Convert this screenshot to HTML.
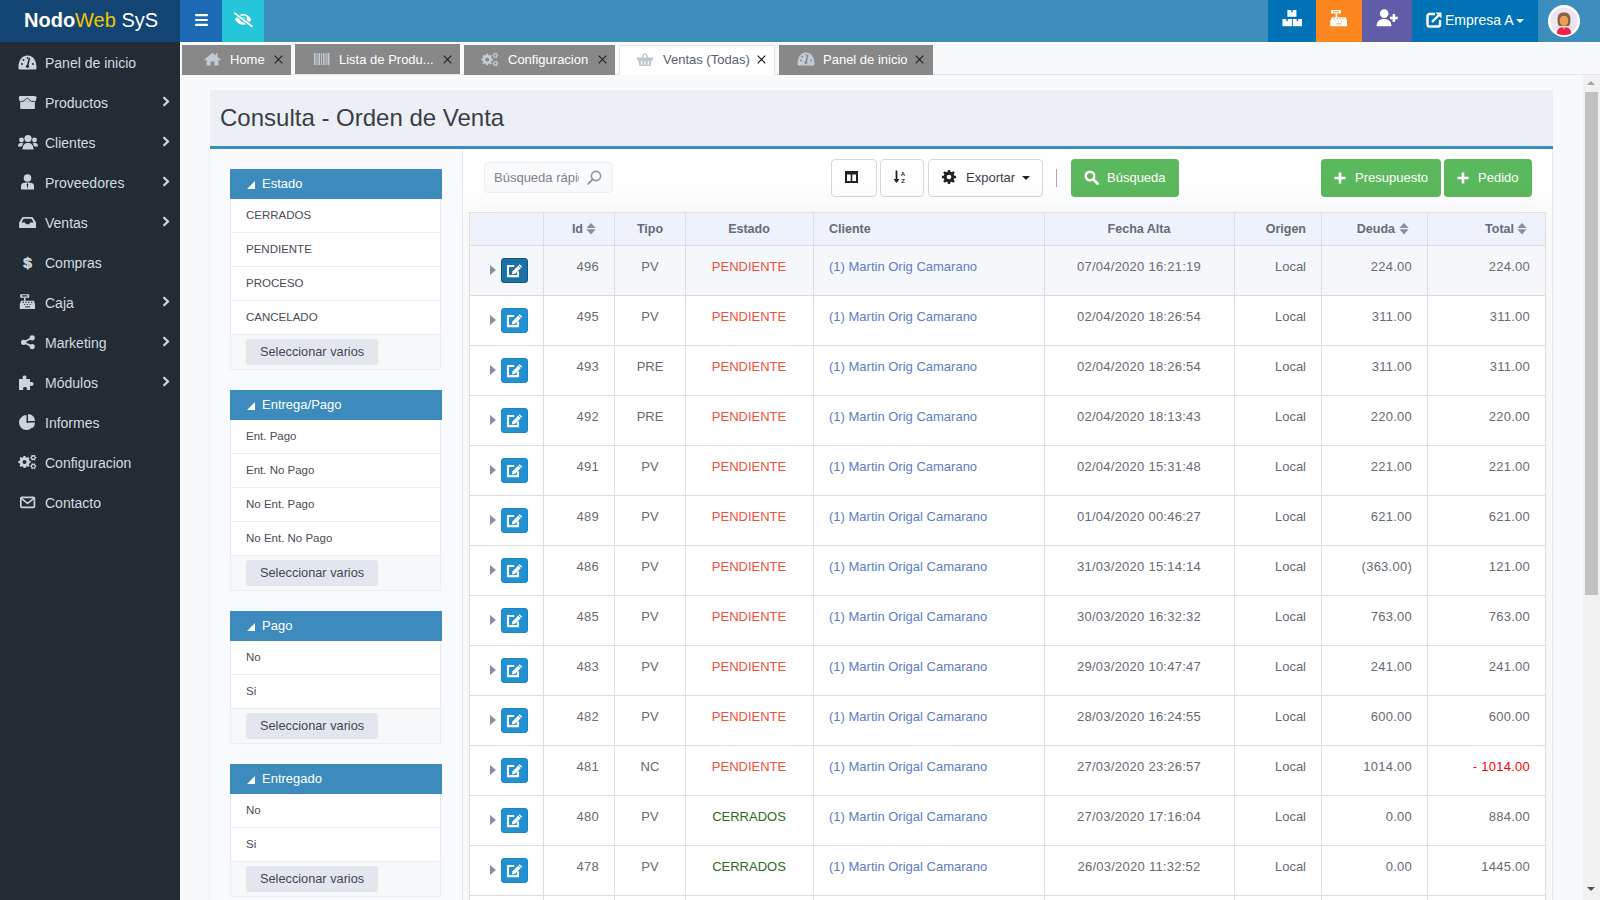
<!DOCTYPE html><html><head><meta charset="utf-8"><style>
*{box-sizing:border-box;margin:0;padding:0}
html,body{width:1600px;height:900px;overflow:hidden}
body{font-family:"Liberation Sans",sans-serif;background:#f8f9fb;position:relative;color:#5c6068}
.a{position:absolute}
svg{display:block}
#logo{left:0;top:0;width:180px;height:42px;background:#124474;color:#fff;font-size:20px;line-height:42px;white-space:nowrap}
#logo b{font-weight:bold}
#logo span{color:#f5c400}
#side{left:0;top:42px;width:180px;height:858px;background:#222c32}
.mi{position:absolute;left:0;width:180px;height:40px;color:#d3dbe2;font-size:14px}
.mi svg{position:absolute;left:18px;top:12px}
.mi .tx{position:absolute;left:45px;top:13px;line-height:16px;white-space:nowrap}
.mi .ch{position:absolute;left:162px;top:14px}
#top{left:180px;top:0;width:1420px;height:42px;background:#3c8dbc}
.tb{position:absolute;top:0;height:42px}
.tab{position:absolute;height:30px;background:#888;color:#fff;font-size:13px}
.tab .tx{position:absolute;top:7px;line-height:16px;white-space:nowrap}
.tab svg{position:absolute}
.fh{position:absolute;left:230px;width:212px;height:30px;background:#3c8bbc;color:#fff;font-size:13px}
.fh .tx{position:absolute;left:32px;top:7px;line-height:16px}
.fh .tri{position:absolute;left:17px;top:12px;width:0;height:0;border-left:8px solid transparent;border-bottom:8px solid #fff}
.fi{position:absolute;left:230px;width:211px;height:34px;background:#fff;border-left:1px solid #e6e9ef;border-right:1px solid #e6e9ef;border-bottom:1px solid #eceef2;font-size:11.5px;color:#4a4d55}
.fi .tx{position:absolute;left:15px;top:9px;line-height:14px;white-space:nowrap}
.ff{position:absolute;left:230px;width:211px;height:35px;background:#f7f8fa;border-left:1px solid #eef0f3;border-right:1px solid #eef0f3;border-bottom:1px solid #eceef2}
.ff .bt{position:absolute;left:15px;top:4px;width:132px;height:26px;background:#e2e7ed;border-radius:3px;font-size:12.75px;color:#44474f;line-height:26px;padding-left:14px;white-space:nowrap}
.tbt{position:absolute;top:159px;height:38px;background:#fff;border:1px solid #d6d8dc;border-radius:4px}
.gbt{position:absolute;top:159px;height:38px;background:#5cb85c;border-radius:4px;color:#fff;font-size:13px}
.gbt .tx{position:absolute;top:11px;line-height:16px;white-space:nowrap}
.gbt svg{position:absolute}

.th{position:absolute;top:212px;height:34px;background:#eef2fa;border-top:1px solid #dcdfe4;border-bottom:1px solid #d9dce1;font-weight:bold;font-size:13.5px;color:#5b6170}
.vl{position:absolute;width:1px;background:#dadde2}
.hl{position:absolute;left:469px;width:1077px;height:1px;background:#dadde2}
.c{position:absolute;font-size:13px;line-height:16px;white-space:nowrap;color:#676b73}
.n{letter-spacing:0.25px}
.eb{position:absolute;left:501px;width:27px;height:25px;background:#1e8fd1;border-radius:3px}
.eb svg{position:absolute;left:-1px;top:-1px}
.ar{position:absolute;left:490px;width:0;height:0;border-top:5px solid transparent;border-bottom:5px solid transparent;border-left:6px solid #8891a3}
.sort{position:absolute;top:223px}
</style></head><body><div id="logo" class="a"><div class="a" style="left:24px;top:-1px"><b>Nodo</b><span>Web</span> SyS</div></div><div id="top" class="a"></div><div class="tb" style="left:180px;width:42px;background:#1c69b4"><svg class="a" style="left:15px;top:14px" width="13" height="12" viewBox="0 0 13 12"><rect x="0" y="0" width="13" height="2.2" rx="1" fill="#fff"/><rect x="0" y="4.9" width="13" height="2.2" rx="1" fill="#fff"/><rect x="0" y="9.8" width="13" height="2.2" rx="1" fill="#fff"/></svg></div><div class="tb" style="left:222px;width:42px;background:#25c5da"><svg class="a" style="left:12px;top:12px" width="19" height="16" viewBox="0 0 19 16"><path d="M1 7.4 C3.5 3.5 6.5 2 9.2 2 C11.9 2 14.9 3.5 17.4 7.4 C14.9 11.3 11.9 12.8 9.2 12.8 C6.5 12.8 3.5 11.3 1 7.4Z" fill="#fff"/><circle cx="9.6" cy="6.9" r="3.3" fill="#25c5da"/><circle cx="9.6" cy="6.9" r="1.7" fill="#fff"/><path d="M0.8 1.3 L17.8 14.2" stroke="#25c5da" stroke-width="3.6"/><path d="M0.8 1.3 L17.8 14.2" stroke="#fff" stroke-width="2" stroke-linecap="round"/></svg></div><div class="tb" style="left:1268px;width:48px;background:#0073b7"><svg class="a" style="left:14px;top:10px" width="20" height="17" viewBox="0 0 20 17"><rect x="5.4" y="0" width="9" height="6.8" fill="#fff"/><rect x="0.4" y="9" width="9.5" height="7.2" fill="#fff"/><rect x="10.8" y="9" width="9.2" height="7.2" fill="#fff"/><rect x="9.2" y="0" width="1.4" height="2.2" fill="#0073b7"/><rect x="4.4" y="9" width="1.4" height="2.2" fill="#0073b7"/><rect x="14.7" y="9" width="1.4" height="2.2" fill="#0073b7"/></svg></div><div class="tb" style="left:1316px;width:46px;background:#fe861f"><svg class="a" style="left:14px;top:10px" width="18" height="17" viewBox="0 0 18 17"><rect x="1" y="0" width="10" height="3.6" rx="0.6" fill="#fff"/><rect x="3" y="1.2" width="6" height="1.2" fill="#f9b070"/><rect x="5.6" y="3.6" width="1.6" height="3.6" fill="#fff"/><path d="M2 7.2 H16 L17 11 V16.2 H0.2 V11Z" fill="#fff"/><g fill="#f9b070"><rect x="3.5" y="8.2" width="1.4" height="1.2"/><rect x="6.5" y="8.2" width="1.4" height="1.2"/><rect x="9.5" y="8.2" width="1.4" height="1.2"/><rect x="12.5" y="8.2" width="1.4" height="1.2"/><rect x="5" y="10.6" width="1.2" height="1"/><rect x="8" y="10.6" width="1.2" height="1"/><rect x="11" y="10.6" width="1.2" height="1"/><rect x="6.5" y="13.2" width="5" height="1.2"/></g></svg></div><div class="tb" style="left:1362px;width:50px;background:#605ca8"><svg class="a" style="left:14px;top:9px" width="22" height="18" viewBox="0 0 22 18"><circle cx="8.2" cy="4.6" r="4.3" fill="#fff"/><path d="M0.6 17.2 C0.6 12 3.4 10 8 10 C12.6 10 15.4 12 15.4 17.2Z" fill="#fff"/><rect x="14" y="7.7" width="7.7" height="2.6" fill="#fff"/><rect x="16.55" y="5.1" width="2.6" height="7.8" fill="#fff"/></svg></div><div class="tb" style="left:1412px;width:126px;background:#0073b7;color:#fff;font-size:14px"><svg class="a" style="left:14px;top:12px" width="16" height="16" viewBox="0 0 16 16"><path d="M9 2 H3.5 C2.5 2 1.5 3 1.5 4 V12.5 C1.5 13.5 2.5 14.5 3.5 14.5 H12 C13 14.5 14 13.5 14 12.5 V8" stroke="#fff" stroke-width="2.4" fill="none"/><path d="M6 10 L14 2" stroke="#fff" stroke-width="2.4"/><path d="M9.5 0.5 H15.5 V6.5Z" fill="#fff"/></svg><div class="a" style="left:33px;top:11px;line-height:18px;white-space:nowrap">Empresa A</div><div class="a" style="left:104px;top:18.5px;width:0;height:0;border-left:4px solid transparent;border-right:4px solid transparent;border-top:4.5px solid #fff"></div></div><svg class="a" style="left:1548px;top:5px" width="32" height="32" viewBox="0 0 32 32"><circle cx="16" cy="16" r="16" fill="#fff"/><circle cx="16" cy="16" r="13.6" fill="#ebe5ef"/><path d="M9.6 16 C9 10 11.5 7.5 16 7.5 C20.5 7.5 23 10 22.4 16 C22.4 19 21.5 21 20 21 H12 C10.5 21 9.6 19 9.6 16Z" fill="#8b5e45"/><ellipse cx="16" cy="15.5" rx="4.3" ry="5.3" fill="#e7a35a"/><path d="M12 11.5 C14 11 17 10 20 12 V10 C18 8.5 14 8.5 12 10Z" fill="#8b5e45"/><path d="M9 28.5 C9 24 11.5 22 16 22 C20.5 22 23 24 23 28.5 C21 29.6 18.5 30.2 16 30.2 C13.5 30.2 11 29.6 9 28.5Z" fill="#f01f4b"/><path d="M14 22 L16 24.5 L18 22Z" fill="#e7a35a"/></svg><div class="a" style="left:180px;top:74px;width:1420px;height:1px;background:#e1e5ec"></div><div class="a" style="left:180px;top:42px;width:1420px;height:3px;background:#fbfcfd"></div><div id="side" class="a"></div><div class="mi" style="top:42px"><svg width="19" height="16" viewBox="0 0 19 16"><path d="M0.5 14 C0.2 6 4.5 1.5 9.5 1.5 C14.5 1.5 18.8 6 18.5 14 C18.5 15 18 15.5 17 15.5 H2 C1 15.5 0.5 15 0.5 14Z" fill="#c9d4dd"/><path d="M9.5 12 L11.5 4" stroke="#222c32" stroke-width="1.6"/><circle cx="9.5" cy="12.3" r="1.6" fill="#222c32"/><circle cx="4" cy="10" r="1" fill="#222c32"/><circle cx="5.5" cy="6" r="1" fill="#222c32"/><circle cx="15" cy="10" r="1" fill="#222c32"/><circle cx="9.5" cy="4" r="0.9" fill="#222c32"/></svg><div class="tx">Panel de inicio</div></div><div class="mi" style="top:82px"><svg width="19" height="16" viewBox="0 0 19 16"><path d="M0.6 3.6 L1.8 2 H17.2 L18.8 3.6 L17.4 7.4 H1.8Z" fill="#c9d4dd"/><path d="M2.2 7.2 H16.9 V14 C16.9 14.6 16.4 15 15.8 15 H3.3 C2.7 15 2.2 14.6 2.2 14Z" fill="#c9d4dd"/><path d="M2.4 7.4 H4.9 L9.3 4 L13.4 7.4 H16.6" stroke="#222c32" stroke-width="0.9" fill="none"/></svg><div class="tx">Productos</div><svg class="ch" width="8" height="11" viewBox="0 0 8 11"><path d="M1.5 1.2 L6 5.5 L1.5 9.8" stroke="#d3dbe2" stroke-width="2.2" fill="none"/></svg></div><div class="mi" style="top:122px"><svg width="20" height="16" viewBox="0 0 20 16"><circle cx="10" cy="4.5" r="3.6" fill="#c9d4dd"/><circle cx="3.5" cy="6" r="2.4" fill="#c9d4dd"/><circle cx="16.5" cy="6" r="2.4" fill="#c9d4dd"/><path d="M4.5 15.5 C4.5 10.5 7 9 10 9 C13 9 15.5 10.5 15.5 15.5Z" fill="#c9d4dd"/><path d="M0 12.5 C0 9.5 1.5 9 3.5 9 C4.5 9 5 9.2 5.5 9.6 C4.5 10.5 4 11.5 3.8 12.5Z" fill="#c9d4dd"/><path d="M20 12.5 C20 9.5 18.5 9 16.5 9 C15.5 9 15 9.2 14.5 9.6 C15.5 10.5 16 11.5 16.2 12.5Z" fill="#c9d4dd"/></svg><div class="tx">Clientes</div><svg class="ch" width="8" height="11" viewBox="0 0 8 11"><path d="M1.5 1.2 L6 5.5 L1.5 9.8" stroke="#d3dbe2" stroke-width="2.2" fill="none"/></svg></div><div class="mi" style="top:162px"><svg width="19" height="16" viewBox="0 0 19 16"><circle cx="9.5" cy="4" r="3.8" fill="#c9d4dd"/><path d="M3 15.5 V12 C3 9.5 5 8.5 9.5 8.5 C14 8.5 16 9.5 16 12 V15.5Z" fill="#c9d4dd"/><path d="M9.5 9 L8.7 10.5 L9.5 15 L10.3 10.5Z" fill="#222c32"/></svg><div class="tx">Proveedores</div><svg class="ch" width="8" height="11" viewBox="0 0 8 11"><path d="M1.5 1.2 L6 5.5 L1.5 9.8" stroke="#d3dbe2" stroke-width="2.2" fill="none"/></svg></div><div class="mi" style="top:202px"><svg width="19" height="16" viewBox="0 0 19 16"><path d="M1.1 8.6 L4.6 3 H14.5 L18 8.6 V13.4 C18 13.8 17.7 14.1 17.3 14.1 H1.8 C1.4 14.1 1.1 13.8 1.1 13.4Z" fill="#c9d4dd"/><path d="M5.6 4.7 H13.5 L15.7 8.4 H12.1 L11.2 10.3 H8 L7.1 8.4 H3.4Z" fill="#222c32"/></svg><div class="tx">Ventas</div><svg class="ch" width="8" height="11" viewBox="0 0 8 11"><path d="M1.5 1.2 L6 5.5 L1.5 9.8" stroke="#d3dbe2" stroke-width="2.2" fill="none"/></svg></div><div class="mi" style="top:242px"><svg width="19" height="16" viewBox="0 0 19 16"><text x="9.5" y="14" font-family="Liberation Sans" font-weight="bold" font-size="15.5" fill="#c9d4dd" stroke="#c9d4dd" stroke-width="0.7" text-anchor="middle">$</text></svg><div class="tx">Compras</div></div><div class="mi" style="top:282px"><svg width="19" height="16" viewBox="0 0 19 16"><rect x="2.2" y="0.3" width="9" height="3.4" rx="0.5" fill="#c9d4dd"/><rect x="4" y="1.3" width="5.4" height="1.2" fill="#222c32"/><rect x="6" y="3.6" width="1.5" height="3.2" fill="#c9d4dd"/><path d="M3 6.8 H16 L17 10.5 V15 H1.8 V10.5Z" fill="#c9d4dd"/><g fill="#222c32"><rect x="4.6" y="7.8" width="1.3" height="1.1"/><rect x="7.4" y="7.8" width="1.3" height="1.1"/><rect x="10.2" y="7.8" width="1.3" height="1.1"/><rect x="13" y="7.8" width="1.3" height="1.1"/><rect x="6" y="10" width="1.1" height="0.9"/><rect x="8.8" y="10" width="1.1" height="0.9"/><rect x="11.6" y="10" width="1.1" height="0.9"/><rect x="7" y="12.4" width="5" height="1"/></g></svg><div class="tx">Caja</div><svg class="ch" width="8" height="11" viewBox="0 0 8 11"><path d="M1.5 1.2 L6 5.5 L1.5 9.8" stroke="#d3dbe2" stroke-width="2.2" fill="none"/></svg></div><div class="mi" style="top:322px"><svg width="19" height="16" viewBox="0 0 19 16"><circle cx="14.2" cy="3.8" r="2.6" fill="#c9d4dd"/><circle cx="5.6" cy="8.3" r="2.6" fill="#c9d4dd"/><circle cx="14.2" cy="12.6" r="2.6" fill="#c9d4dd"/><path d="M5.6 8.3 L14.2 3.8 M5.6 8.3 L14.2 12.6" stroke="#c9d4dd" stroke-width="1.8"/></svg><div class="tx">Marketing</div><svg class="ch" width="8" height="11" viewBox="0 0 8 11"><path d="M1.5 1.2 L6 5.5 L1.5 9.8" stroke="#d3dbe2" stroke-width="2.2" fill="none"/></svg></div><div class="mi" style="top:362px"><svg width="19" height="16" viewBox="0 0 19 16"><path d="M1 5 H5 C4 3.5 4.5 1.5 6.5 1.5 C8.5 1.5 9 3.5 8 5 H12 V8.5 C13.5 7.5 15.5 8 15.5 10 C15.5 12 13.5 12.5 12 11.5 V16 H8.5 C9.5 14.5 9 13 7 13 C5 13 4.5 14.5 5.5 16 H1Z" fill="#c9d4dd"/></svg><div class="tx">Módulos</div><svg class="ch" width="8" height="11" viewBox="0 0 8 11"><path d="M1.5 1.2 L6 5.5 L1.5 9.8" stroke="#d3dbe2" stroke-width="2.2" fill="none"/></svg></div><div class="mi" style="top:402px"><svg width="19" height="16" viewBox="0 0 19 16"><path d="M8.5 1 A7.5 7.5 0 1 0 16 9 H8.5Z" fill="#c9d4dd"/><path d="M10 0 A7 7 0 0 1 17 7 H10Z" fill="#c9d4dd"/><path d="M10 8.5 H17 A7 7 0 0 1 14.5 14Z" fill="#c9d4dd"/></svg><div class="tx">Informes</div></div><div class="mi" style="top:442px"><svg width="19" height="16" viewBox="0 0 19 16"><path d="M11.26 6.82 L12.62 6.98 L12.62 9.02 L11.26 9.18 L10.70 10.53 L11.54 11.60 L10.10 13.04 L9.03 12.20 L7.68 12.76 L7.52 14.12 L5.48 14.12 L5.32 12.76 L3.97 12.20 L2.90 13.04 L1.46 11.60 L2.30 10.53 L1.74 9.18 L0.38 9.02 L0.38 6.98 L1.74 6.82 L2.30 5.47 L1.46 4.40 L2.90 2.96 L3.97 3.80 L5.32 3.24 L5.48 1.88 L7.52 1.88 L7.68 3.24 L9.03 3.80 L10.10 2.96 L11.54 4.40 L10.70 5.47Z" fill="#c9d4dd"/><circle cx="6.5" cy="8" r="2.0" fill="#222c32"/><path d="M17.57 2.83 L18.33 2.92 L18.33 4.28 L17.57 4.37 L17.10 5.19 L17.40 5.88 L16.23 6.56 L15.77 5.95 L14.83 5.95 L14.37 6.56 L13.20 5.88 L13.50 5.19 L13.03 4.37 L12.27 4.28 L12.27 2.92 L13.03 2.83 L13.50 2.01 L13.20 1.32 L14.37 0.64 L14.83 1.25 L15.77 1.25 L16.23 0.64 L17.40 1.32 L17.10 2.01Z" fill="#c9d4dd"/><circle cx="15.3" cy="3.6" r="1.2" fill="#222c32"/><path d="M17.57 11.43 L18.33 11.52 L18.33 12.88 L17.57 12.97 L17.10 13.79 L17.40 14.48 L16.23 15.16 L15.77 14.55 L14.83 14.55 L14.37 15.16 L13.20 14.48 L13.50 13.79 L13.03 12.97 L12.27 12.88 L12.27 11.52 L13.03 11.43 L13.50 10.61 L13.20 9.92 L14.37 9.24 L14.83 9.85 L15.77 9.85 L16.23 9.24 L17.40 9.92 L17.10 10.61Z" fill="#c9d4dd"/><circle cx="15.3" cy="12.2" r="1.2" fill="#222c32"/></svg><div class="tx">Configuracion</div></div><div class="mi" style="top:482px"><svg width="19" height="16" viewBox="0 0 19 16"><rect x="2.8" y="3.3" width="13.6" height="10" rx="1" fill="none" stroke="#c9d4dd" stroke-width="1.7"/><path d="M3 4.2 L9.6 9.4 L16.2 4.2" stroke="#c9d4dd" stroke-width="1.6" fill="none"/></svg><div class="tx">Contacto</div></div><div class="tab" style="left:182px;top:45px;width:109px;height:30px"><div class="a" style="left:22px;top:7px"><svg width="17" height="14" viewBox="0 0 17 14"><path d="M8.5 0.8 L0.3 7.6 L1.2 8.7 L2.6 7.5 V13.6 H6.6 V9.6 H10.4 V13.6 H14.4 V7.5 L15.8 8.7 L16.7 7.6 L13.6 5 V1.3 H11.8 V3.5Z" fill="#c2ccd4"/></svg></div><div class="tx" style="left:48px;top:6.5px">Home</div><div class="a" style="left:92px;top:10px"><svg width="9" height="9" viewBox="0 0 9 9"><path d="M0.7 0.7 L8.3 8.3 M8.3 0.7 L0.7 8.3" stroke="#222" stroke-width="1.15"/></svg></div></div><div class="tab" style="left:295px;top:44px;width:165px;height:30px"><div class="a" style="left:19px;top:9px"><svg width="16" height="12" viewBox="0 0 16 12"><g fill="#c2ccd4"><rect x="0" y="0" width="1.5" height="12"/><rect x="2.5" y="0" width="1" height="12"/><rect x="4.5" y="0" width="1.5" height="12"/><rect x="7" y="0" width="1" height="12"/><rect x="9" y="0" width="1.5" height="12"/><rect x="11.5" y="0" width="1" height="12"/><rect x="13.5" y="0" width="2" height="12"/></g></svg></div><div class="tx" style="left:44px;top:7.5px">Lista de Produ...</div><div class="a" style="left:148px;top:11px"><svg width="9" height="9" viewBox="0 0 9 9"><path d="M0.7 0.7 L8.3 8.3 M8.3 0.7 L0.7 8.3" stroke="#222" stroke-width="1.15"/></svg></div></div><div class="tab" style="left:464px;top:45px;width:151px;height:30px"><div class="a" style="left:17px;top:7px"><svg width="18" height="15" viewBox="0 0 19 16"><path d="M11.26 6.82 L12.62 6.98 L12.62 9.02 L11.26 9.18 L10.70 10.53 L11.54 11.60 L10.10 13.04 L9.03 12.20 L7.68 12.76 L7.52 14.12 L5.48 14.12 L5.32 12.76 L3.97 12.20 L2.90 13.04 L1.46 11.60 L2.30 10.53 L1.74 9.18 L0.38 9.02 L0.38 6.98 L1.74 6.82 L2.30 5.47 L1.46 4.40 L2.90 2.96 L3.97 3.80 L5.32 3.24 L5.48 1.88 L7.52 1.88 L7.68 3.24 L9.03 3.80 L10.10 2.96 L11.54 4.40 L10.70 5.47Z" fill="#c2ccd4"/><circle cx="6.5" cy="8" r="2.0" fill="#888"/><path d="M17.57 2.83 L18.33 2.92 L18.33 4.28 L17.57 4.37 L17.10 5.19 L17.40 5.88 L16.23 6.56 L15.77 5.95 L14.83 5.95 L14.37 6.56 L13.20 5.88 L13.50 5.19 L13.03 4.37 L12.27 4.28 L12.27 2.92 L13.03 2.83 L13.50 2.01 L13.20 1.32 L14.37 0.64 L14.83 1.25 L15.77 1.25 L16.23 0.64 L17.40 1.32 L17.10 2.01Z" fill="#c2ccd4"/><circle cx="15.3" cy="3.6" r="1.2" fill="#888"/><path d="M17.57 11.43 L18.33 11.52 L18.33 12.88 L17.57 12.97 L17.10 13.79 L17.40 14.48 L16.23 15.16 L15.77 14.55 L14.83 14.55 L14.37 15.16 L13.20 14.48 L13.50 13.79 L13.03 12.97 L12.27 12.88 L12.27 11.52 L13.03 11.43 L13.50 10.61 L13.20 9.92 L14.37 9.24 L14.83 9.85 L15.77 9.85 L16.23 9.24 L17.40 9.92 L17.10 10.61Z" fill="#c2ccd4"/><circle cx="15.3" cy="12.2" r="1.2" fill="#888"/></svg></div><div class="tx" style="left:44px;top:6.5px">Configuracion</div><div class="a" style="left:134px;top:10px"><svg width="9" height="9" viewBox="0 0 9 9"><path d="M0.7 0.7 L8.3 8.3 M8.3 0.7 L0.7 8.3" stroke="#222" stroke-width="1.15"/></svg></div></div><div class="tab" style="left:779px;top:45px;width:154px;height:30px"><div class="a" style="left:18px;top:6px"><svg width="18" height="15" viewBox="0 0 19 16"><path d="M0.5 14 C0.2 6 4.5 1.5 9.5 1.5 C14.5 1.5 18.8 6 18.5 14 C18.5 15 18 15.5 17 15.5 H2 C1 15.5 0.5 15 0.5 14Z" fill="#c2ccd4"/><path d="M9.5 12 L11.5 4" stroke="#888" stroke-width="1.6"/><circle cx="9.5" cy="12.3" r="1.6" fill="#888"/><circle cx="4" cy="10" r="1" fill="#888"/><circle cx="5.5" cy="6" r="1" fill="#888"/><circle cx="15" cy="10" r="1" fill="#888"/><circle cx="9.5" cy="4" r="0.9" fill="#888"/></svg></div><div class="tx" style="left:44px;top:6.5px">Panel de inicio</div><div class="a" style="left:136px;top:10px"><svg width="9" height="9" viewBox="0 0 9 9"><path d="M0.7 0.7 L8.3 8.3 M8.3 0.7 L0.7 8.3" stroke="#222" stroke-width="1.15"/></svg></div></div><div class="a" style="left:619px;top:45px;width:156px;height:30px;background:#fff;border:1px solid #dfe4eb;border-bottom:none"></div><div class="a" style="left:637px;top:53px"><svg width="16" height="13" viewBox="0 0 16 13"><path d="M5 5 L7.5 0.5 M11 5 L8.5 0.5" stroke="#bcc8d0" stroke-width="1.5"/><rect x="0" y="4.5" width="16" height="2.5" fill="#bcc8d0"/><path d="M1.2 7 H14.8 L13.5 13 H2.5Z" fill="#bcc8d0"/><g fill="#fff"><rect x="4" y="8.2" width="1.2" height="3.5"/><rect x="7.4" y="8.2" width="1.2" height="3.5"/><rect x="10.8" y="8.2" width="1.2" height="3.5"/></g></svg></div><div class="a" style="left:663px;top:51.5px;font-size:13px;line-height:16px;color:#5b6270;white-space:nowrap">Ventas (Todas)</div><div class="a" style="left:757px;top:55px"><svg width="9" height="9" viewBox="0 0 9 9"><path d="M0.7 0.7 L8.3 8.3 M8.3 0.7 L0.7 8.3" stroke="#111" stroke-width="1.15"/></svg></div><div class="a" style="left:1583px;top:75px;width:17px;height:825px;background:#f1f1f1"></div><div class="a" style="left:1585px;top:92px;width:13px;height:503px;background:#c1c1c1"></div><div class="a" style="left:1587px;top:81px;width:0;height:0;border-left:4px solid transparent;border-right:4px solid transparent;border-bottom:4px solid #a3a3a3"></div><div class="a" style="left:1587px;top:887px;width:0;height:0;border-left:4px solid transparent;border-right:4px solid transparent;border-top:4px solid #505050"></div><div class="a" style="left:210px;top:90px;width:1343px;height:59px;background:#eceff4;border-bottom:3px solid #3c8dbc"></div><div class="a" style="left:220px;top:104px;font-size:24px;line-height:28px;color:#3a3e46;white-space:nowrap">Consulta - Orden de Venta</div><div class="a" style="left:209px;top:149px;width:1344px;height:751px;background:#f9fafd;border-left:1px solid #f1f3f6"></div><div class="a" style="left:462px;top:149px;width:1091px;height:751px;background:#fff;border-left:1px solid #e4e8ee;border-right:1px solid #e4e8ee"></div><div class="fh" style="top:169px"><div class="tri"></div><div class="tx">Estado</div></div><div class="fi" style="top:199px"><div class="tx">CERRADOS</div></div><div class="fi" style="top:233px"><div class="tx">PENDIENTE</div></div><div class="fi" style="top:267px"><div class="tx">PROCESO</div></div><div class="fi" style="top:301px"><div class="tx">CANCELADO</div></div><div class="ff" style="top:335px"><div class="bt">Seleccionar varios</div></div><div class="fh" style="top:390px"><div class="tri"></div><div class="tx">Entrega/Pago</div></div><div class="fi" style="top:420px"><div class="tx">Ent. Pago</div></div><div class="fi" style="top:454px"><div class="tx">Ent. No Pago</div></div><div class="fi" style="top:488px"><div class="tx">No Ent. Pago</div></div><div class="fi" style="top:522px"><div class="tx">No Ent. No Pago</div></div><div class="ff" style="top:556px"><div class="bt">Seleccionar varios</div></div><div class="fh" style="top:611px"><div class="tri"></div><div class="tx">Pago</div></div><div class="fi" style="top:641px"><div class="tx">No</div></div><div class="fi" style="top:675px"><div class="tx">Si</div></div><div class="ff" style="top:709px"><div class="bt">Seleccionar varios</div></div><div class="fh" style="top:764px"><div class="tri"></div><div class="tx">Entregado</div></div><div class="fi" style="top:794px"><div class="tx">No</div></div><div class="fi" style="top:828px"><div class="tx">Si</div></div><div class="ff" style="top:862px"><div class="bt">Seleccionar varios</div></div><div class="a" style="left:484px;top:162px;width:129px;height:31px;background:#f9fafc;border:1px solid #edf0f3;border-radius:4px"></div><div class="a" style="left:494px;top:170px;width:85px;overflow:hidden;font-size:13px;line-height:16px;color:#7d828b;white-space:nowrap">Búsqueda rápida</div><svg class="a" style="left:587px;top:170px" width="15" height="15" viewBox="0 0 15 15"><circle cx="9" cy="6" r="4.6" stroke="#8c939c" stroke-width="1.6" fill="none"/><path d="M5.6 9.4 L1.2 13.8" stroke="#8c939c" stroke-width="1.8" stroke-linecap="round"/></svg><div class="tbt" style="left:831px;width:46px"><svg class="a" style="left:13px;top:11px" width="13" height="12" viewBox="0 0 13 12"><rect x="1" y="1" width="11" height="10" fill="none" stroke="#222" stroke-width="2"/><rect x="1" y="1" width="11" height="2.5" fill="#222"/><rect x="5.7" y="1" width="1.6" height="10" fill="#222"/></svg></div><div class="tbt" style="left:880px;width:44px"><svg class="a" style="left:12px;top:10px" width="14" height="14" viewBox="0 0 14 14"><path d="M3.5 0.5 V12" stroke="#222" stroke-width="1.8"/><path d="M0.5 9 L3.5 13 L6.5 9Z" fill="#222"/><text x="10" y="5.5" font-family="Liberation Sans" font-weight="bold" font-size="6" fill="#222" text-anchor="middle">A</text><text x="10" y="13" font-family="Liberation Sans" font-weight="bold" font-size="6" fill="#222" text-anchor="middle">Z</text></svg></div><div class="tbt" style="left:928px;width:115px"><svg class="a" style="left:12px;top:9px" width="16" height="16" viewBox="0 0 16 16"><path d="M13.24 6.70 L15.10 6.82 L15.10 9.18 L13.24 9.30 L12.63 10.79 L13.86 12.19 L12.19 13.86 L10.79 12.63 L9.30 13.24 L9.18 15.10 L6.82 15.10 L6.70 13.24 L5.21 12.63 L3.81 13.86 L2.14 12.19 L3.37 10.79 L2.76 9.30 L0.90 9.18 L0.90 6.82 L2.76 6.70 L3.37 5.21 L2.14 3.81 L3.81 2.14 L5.21 3.37 L6.70 2.76 L6.82 0.90 L9.18 0.90 L9.30 2.76 L10.79 3.37 L12.19 2.14 L13.86 3.81 L12.63 5.21Z" fill="#222"/><circle cx="8" cy="8" r="2.3" fill="#fff"/></svg><div class="a" style="left:37px;top:10px;font-size:13px;line-height:16px;color:#3a3f47;white-space:nowrap">Exportar</div><div class="a" style="left:93px;top:16px;width:0;height:0;border-left:4px solid transparent;border-right:4px solid transparent;border-top:4.5px solid #222"></div></div><div class="a" style="left:1056px;top:169px;width:1px;height:18px;background:#a8adb3"></div><div class="gbt" style="left:1071px;width:108px"><div class="a" style="left:13px;top:11px"><svg width="15" height="15" viewBox="0 0 15 15"><circle cx="6" cy="6" r="4.3" stroke="#fff" stroke-width="2.4" fill="none"/><path d="M9.2 9.2 L13.5 13.5" stroke="#fff" stroke-width="2.8" stroke-linecap="round"/></svg></div><div class="tx" style="left:36px">Búsqueda</div></div><div class="gbt" style="left:1321px;width:120px"><div class="a" style="left:13px;top:13px"><svg width="12" height="12" viewBox="0 0 12 12"><path d="M6 0.5 V11.5 M0.5 6 H11.5" stroke="#fff" stroke-width="2.6"/></svg></div><div class="tx" style="left:34px">Presupuesto</div></div><div class="gbt" style="left:1444px;width:88px"><div class="a" style="left:13px;top:13px"><svg width="12" height="12" viewBox="0 0 12 12"><path d="M6 0.5 V11.5 M0.5 6 H11.5" stroke="#fff" stroke-width="2.6"/></svg></div><div class="tx" style="left:34px">Pedido</div></div><div class="a" style="left:463px;top:149px;width:1089px;height:751px;overflow:hidden"><div class="a" style="left:6px;top:63px;width:1077px;height:800px;box-shadow:0 0 28px 6px rgba(40,50,70,0.055);background:#fff"></div></div><div class="th" style="left:469px;width:1077px"></div><div class="a" style="left:470px;top:246px;width:1075px;height:49px;background:#f5f7fb"></div><div class="hl" style="top:295px"></div><div class="hl" style="top:345px"></div><div class="hl" style="top:395px"></div><div class="hl" style="top:445px"></div><div class="hl" style="top:495px"></div><div class="hl" style="top:545px"></div><div class="hl" style="top:595px"></div><div class="hl" style="top:645px"></div><div class="hl" style="top:695px"></div><div class="hl" style="top:745px"></div><div class="hl" style="top:795px"></div><div class="hl" style="top:845px"></div><div class="hl" style="top:895px"></div><div class="hl" style="top:945px"></div><div class="vl" style="left:469px;top:212px;height:688px"></div><div class="vl" style="left:543px;top:212px;height:688px"></div><div class="vl" style="left:614px;top:212px;height:688px"></div><div class="vl" style="left:685px;top:212px;height:688px"></div><div class="vl" style="left:813px;top:212px;height:688px"></div><div class="vl" style="left:1044px;top:212px;height:688px"></div><div class="vl" style="left:1234px;top:212px;height:688px"></div><div class="vl" style="left:1321px;top:212px;height:688px"></div><div class="vl" style="left:1427px;top:212px;height:688px"></div><div class="vl" style="left:1545px;top:212px;height:688px"></div><div class="c" style="right:1017px;top:221px;font-weight:bold;font-size:12.5px;color:#656b79;letter-spacing:0">Id</div><div class="sort" style="left:585.5px"><svg width="10" height="12" viewBox="0 0 10 12"><path d="M5 0 L9.6 5 H0.4Z M5 11.4 L9.6 6.3 H0.4Z" fill="#8690a2"/></svg></div><div class="c" style="left:550px;width:200px;text-align:center;top:221px;font-weight:bold;font-size:12.5px;color:#656b79;letter-spacing:0">Tipo</div><div class="c" style="left:649px;width:200px;text-align:center;top:221px;font-weight:bold;font-size:12.5px;color:#656b79;letter-spacing:0">Estado</div><div class="c" style="left:829px;top:221px;font-weight:bold;font-size:12.5px;color:#656b79;letter-spacing:0">Cliente</div><div class="c" style="left:1039px;width:200px;text-align:center;top:221px;font-weight:bold;font-size:12.5px;color:#656b79;letter-spacing:0">Fecha Alta</div><div class="c" style="right:294px;top:221px;font-weight:bold;font-size:12.5px;color:#656b79;letter-spacing:0">Origen</div><div class="c" style="right:205px;top:221px;font-weight:bold;font-size:12.5px;color:#656b79;letter-spacing:0">Deuda</div><div class="sort" style="left:1398.5px"><svg width="10" height="12" viewBox="0 0 10 12"><path d="M5 0 L9.6 5 H0.4Z M5 11.4 L9.6 6.3 H0.4Z" fill="#8690a2"/></svg></div><div class="c" style="right:86px;top:221px;font-weight:bold;font-size:12.5px;color:#656b79;letter-spacing:0">Total</div><div class="sort" style="left:1516.5px"><svg width="10" height="12" viewBox="0 0 10 12"><path d="M5 0 L9.6 5 H0.4Z M5 11.4 L9.6 6.3 H0.4Z" fill="#8690a2"/></svg></div><div class="ar" style="top:265px"></div><div class="eb" style="top:258px;background:#1b70a6;border:1px solid #0d5687"><svg width="27" height="25" viewBox="0 0 27 25"><path d="M13.2 8 H7 V18.1 H17 V13.5" stroke="#fff" stroke-width="2.1" fill="none"/><path d="M10.8 16.4 L11.6 13.2 L18.6 6.2 L21.2 8.8 L14.2 15.8Z" fill="#fff"/><path d="M17.4 7.4 L20 10" stroke="#1b70a6" stroke-width="0.8"/></svg></div><div class="c n" style="right:1001px;top:258.5px">496</div><div class="c" style="left:550px;width:200px;text-align:center;top:258.5px">PV</div><div class="c" style="left:649px;width:200px;text-align:center;top:258.5px;color:#f0513a">PENDIENTE</div><div class="c" style="left:829px;top:258.5px;color:#5d7ec6">(1) Martin Orig Camarano</div><div class="c n" style="left:1039px;width:200px;text-align:center;top:258.5px">07/04/2020 16:21:19</div><div class="c" style="right:294px;top:258.5px">Local</div><div class="c n" style="right:188px;top:258.5px">224.00</div><div class="c n" style="right:70px;top:258.5px;color:#676b73">224.00</div><div class="ar" style="top:315px"></div><div class="eb" style="top:308px;background:#2191d1;border:1px solid #1a84c4"><svg width="27" height="25" viewBox="0 0 27 25"><path d="M13.2 8 H7 V18.1 H17 V13.5" stroke="#fff" stroke-width="2.1" fill="none"/><path d="M10.8 16.4 L11.6 13.2 L18.6 6.2 L21.2 8.8 L14.2 15.8Z" fill="#fff"/><path d="M17.4 7.4 L20 10" stroke="#2191d1" stroke-width="0.8"/></svg></div><div class="c n" style="right:1001px;top:308.5px">495</div><div class="c" style="left:550px;width:200px;text-align:center;top:308.5px">PV</div><div class="c" style="left:649px;width:200px;text-align:center;top:308.5px;color:#f0513a">PENDIENTE</div><div class="c" style="left:829px;top:308.5px;color:#5d7ec6">(1) Martin Orig Camarano</div><div class="c n" style="left:1039px;width:200px;text-align:center;top:308.5px">02/04/2020 18:26:54</div><div class="c" style="right:294px;top:308.5px">Local</div><div class="c n" style="right:188px;top:308.5px">311.00</div><div class="c n" style="right:70px;top:308.5px;color:#676b73">311.00</div><div class="ar" style="top:365px"></div><div class="eb" style="top:358px;background:#2191d1;border:1px solid #1a84c4"><svg width="27" height="25" viewBox="0 0 27 25"><path d="M13.2 8 H7 V18.1 H17 V13.5" stroke="#fff" stroke-width="2.1" fill="none"/><path d="M10.8 16.4 L11.6 13.2 L18.6 6.2 L21.2 8.8 L14.2 15.8Z" fill="#fff"/><path d="M17.4 7.4 L20 10" stroke="#2191d1" stroke-width="0.8"/></svg></div><div class="c n" style="right:1001px;top:358.5px">493</div><div class="c" style="left:550px;width:200px;text-align:center;top:358.5px">PRE</div><div class="c" style="left:649px;width:200px;text-align:center;top:358.5px;color:#f0513a">PENDIENTE</div><div class="c" style="left:829px;top:358.5px;color:#5d7ec6">(1) Martin Orig Camarano</div><div class="c n" style="left:1039px;width:200px;text-align:center;top:358.5px">02/04/2020 18:26:54</div><div class="c" style="right:294px;top:358.5px">Local</div><div class="c n" style="right:188px;top:358.5px">311.00</div><div class="c n" style="right:70px;top:358.5px;color:#676b73">311.00</div><div class="ar" style="top:415px"></div><div class="eb" style="top:408px;background:#2191d1;border:1px solid #1a84c4"><svg width="27" height="25" viewBox="0 0 27 25"><path d="M13.2 8 H7 V18.1 H17 V13.5" stroke="#fff" stroke-width="2.1" fill="none"/><path d="M10.8 16.4 L11.6 13.2 L18.6 6.2 L21.2 8.8 L14.2 15.8Z" fill="#fff"/><path d="M17.4 7.4 L20 10" stroke="#2191d1" stroke-width="0.8"/></svg></div><div class="c n" style="right:1001px;top:408.5px">492</div><div class="c" style="left:550px;width:200px;text-align:center;top:408.5px">PRE</div><div class="c" style="left:649px;width:200px;text-align:center;top:408.5px;color:#f0513a">PENDIENTE</div><div class="c" style="left:829px;top:408.5px;color:#5d7ec6">(1) Martin Orig Camarano</div><div class="c n" style="left:1039px;width:200px;text-align:center;top:408.5px">02/04/2020 18:13:43</div><div class="c" style="right:294px;top:408.5px">Local</div><div class="c n" style="right:188px;top:408.5px">220.00</div><div class="c n" style="right:70px;top:408.5px;color:#676b73">220.00</div><div class="ar" style="top:465px"></div><div class="eb" style="top:458px;background:#2191d1;border:1px solid #1a84c4"><svg width="27" height="25" viewBox="0 0 27 25"><path d="M13.2 8 H7 V18.1 H17 V13.5" stroke="#fff" stroke-width="2.1" fill="none"/><path d="M10.8 16.4 L11.6 13.2 L18.6 6.2 L21.2 8.8 L14.2 15.8Z" fill="#fff"/><path d="M17.4 7.4 L20 10" stroke="#2191d1" stroke-width="0.8"/></svg></div><div class="c n" style="right:1001px;top:458.5px">491</div><div class="c" style="left:550px;width:200px;text-align:center;top:458.5px">PV</div><div class="c" style="left:649px;width:200px;text-align:center;top:458.5px;color:#f0513a">PENDIENTE</div><div class="c" style="left:829px;top:458.5px;color:#5d7ec6">(1) Martin Orig Camarano</div><div class="c n" style="left:1039px;width:200px;text-align:center;top:458.5px">02/04/2020 15:31:48</div><div class="c" style="right:294px;top:458.5px">Local</div><div class="c n" style="right:188px;top:458.5px">221.00</div><div class="c n" style="right:70px;top:458.5px;color:#676b73">221.00</div><div class="ar" style="top:515px"></div><div class="eb" style="top:508px;background:#2191d1;border:1px solid #1a84c4"><svg width="27" height="25" viewBox="0 0 27 25"><path d="M13.2 8 H7 V18.1 H17 V13.5" stroke="#fff" stroke-width="2.1" fill="none"/><path d="M10.8 16.4 L11.6 13.2 L18.6 6.2 L21.2 8.8 L14.2 15.8Z" fill="#fff"/><path d="M17.4 7.4 L20 10" stroke="#2191d1" stroke-width="0.8"/></svg></div><div class="c n" style="right:1001px;top:508.5px">489</div><div class="c" style="left:550px;width:200px;text-align:center;top:508.5px">PV</div><div class="c" style="left:649px;width:200px;text-align:center;top:508.5px;color:#f0513a">PENDIENTE</div><div class="c" style="left:829px;top:508.5px;color:#5d7ec6">(1) Martin Origal Camarano</div><div class="c n" style="left:1039px;width:200px;text-align:center;top:508.5px">01/04/2020 00:46:27</div><div class="c" style="right:294px;top:508.5px">Local</div><div class="c n" style="right:188px;top:508.5px">621.00</div><div class="c n" style="right:70px;top:508.5px;color:#676b73">621.00</div><div class="ar" style="top:565px"></div><div class="eb" style="top:558px;background:#2191d1;border:1px solid #1a84c4"><svg width="27" height="25" viewBox="0 0 27 25"><path d="M13.2 8 H7 V18.1 H17 V13.5" stroke="#fff" stroke-width="2.1" fill="none"/><path d="M10.8 16.4 L11.6 13.2 L18.6 6.2 L21.2 8.8 L14.2 15.8Z" fill="#fff"/><path d="M17.4 7.4 L20 10" stroke="#2191d1" stroke-width="0.8"/></svg></div><div class="c n" style="right:1001px;top:558.5px">486</div><div class="c" style="left:550px;width:200px;text-align:center;top:558.5px">PV</div><div class="c" style="left:649px;width:200px;text-align:center;top:558.5px;color:#f0513a">PENDIENTE</div><div class="c" style="left:829px;top:558.5px;color:#5d7ec6">(1) Martin Origal Camarano</div><div class="c n" style="left:1039px;width:200px;text-align:center;top:558.5px">31/03/2020 15:14:14</div><div class="c" style="right:294px;top:558.5px">Local</div><div class="c n" style="right:188px;top:558.5px">(363.00)</div><div class="c n" style="right:70px;top:558.5px;color:#676b73">121.00</div><div class="ar" style="top:615px"></div><div class="eb" style="top:608px;background:#2191d1;border:1px solid #1a84c4"><svg width="27" height="25" viewBox="0 0 27 25"><path d="M13.2 8 H7 V18.1 H17 V13.5" stroke="#fff" stroke-width="2.1" fill="none"/><path d="M10.8 16.4 L11.6 13.2 L18.6 6.2 L21.2 8.8 L14.2 15.8Z" fill="#fff"/><path d="M17.4 7.4 L20 10" stroke="#2191d1" stroke-width="0.8"/></svg></div><div class="c n" style="right:1001px;top:608.5px">485</div><div class="c" style="left:550px;width:200px;text-align:center;top:608.5px">PV</div><div class="c" style="left:649px;width:200px;text-align:center;top:608.5px;color:#f0513a">PENDIENTE</div><div class="c" style="left:829px;top:608.5px;color:#5d7ec6">(1) Martin Origal Camarano</div><div class="c n" style="left:1039px;width:200px;text-align:center;top:608.5px">30/03/2020 16:32:32</div><div class="c" style="right:294px;top:608.5px">Local</div><div class="c n" style="right:188px;top:608.5px">763.00</div><div class="c n" style="right:70px;top:608.5px;color:#676b73">763.00</div><div class="ar" style="top:665px"></div><div class="eb" style="top:658px;background:#2191d1;border:1px solid #1a84c4"><svg width="27" height="25" viewBox="0 0 27 25"><path d="M13.2 8 H7 V18.1 H17 V13.5" stroke="#fff" stroke-width="2.1" fill="none"/><path d="M10.8 16.4 L11.6 13.2 L18.6 6.2 L21.2 8.8 L14.2 15.8Z" fill="#fff"/><path d="M17.4 7.4 L20 10" stroke="#2191d1" stroke-width="0.8"/></svg></div><div class="c n" style="right:1001px;top:658.5px">483</div><div class="c" style="left:550px;width:200px;text-align:center;top:658.5px">PV</div><div class="c" style="left:649px;width:200px;text-align:center;top:658.5px;color:#f0513a">PENDIENTE</div><div class="c" style="left:829px;top:658.5px;color:#5d7ec6">(1) Martin Origal Camarano</div><div class="c n" style="left:1039px;width:200px;text-align:center;top:658.5px">29/03/2020 10:47:47</div><div class="c" style="right:294px;top:658.5px">Local</div><div class="c n" style="right:188px;top:658.5px">241.00</div><div class="c n" style="right:70px;top:658.5px;color:#676b73">241.00</div><div class="ar" style="top:715px"></div><div class="eb" style="top:708px;background:#2191d1;border:1px solid #1a84c4"><svg width="27" height="25" viewBox="0 0 27 25"><path d="M13.2 8 H7 V18.1 H17 V13.5" stroke="#fff" stroke-width="2.1" fill="none"/><path d="M10.8 16.4 L11.6 13.2 L18.6 6.2 L21.2 8.8 L14.2 15.8Z" fill="#fff"/><path d="M17.4 7.4 L20 10" stroke="#2191d1" stroke-width="0.8"/></svg></div><div class="c n" style="right:1001px;top:708.5px">482</div><div class="c" style="left:550px;width:200px;text-align:center;top:708.5px">PV</div><div class="c" style="left:649px;width:200px;text-align:center;top:708.5px;color:#f0513a">PENDIENTE</div><div class="c" style="left:829px;top:708.5px;color:#5d7ec6">(1) Martin Origal Camarano</div><div class="c n" style="left:1039px;width:200px;text-align:center;top:708.5px">28/03/2020 16:24:55</div><div class="c" style="right:294px;top:708.5px">Local</div><div class="c n" style="right:188px;top:708.5px">600.00</div><div class="c n" style="right:70px;top:708.5px;color:#676b73">600.00</div><div class="ar" style="top:765px"></div><div class="eb" style="top:758px;background:#2191d1;border:1px solid #1a84c4"><svg width="27" height="25" viewBox="0 0 27 25"><path d="M13.2 8 H7 V18.1 H17 V13.5" stroke="#fff" stroke-width="2.1" fill="none"/><path d="M10.8 16.4 L11.6 13.2 L18.6 6.2 L21.2 8.8 L14.2 15.8Z" fill="#fff"/><path d="M17.4 7.4 L20 10" stroke="#2191d1" stroke-width="0.8"/></svg></div><div class="c n" style="right:1001px;top:758.5px">481</div><div class="c" style="left:550px;width:200px;text-align:center;top:758.5px">NC</div><div class="c" style="left:649px;width:200px;text-align:center;top:758.5px;color:#f0513a">PENDIENTE</div><div class="c" style="left:829px;top:758.5px;color:#5d7ec6">(1) Martin Origal Camarano</div><div class="c n" style="left:1039px;width:200px;text-align:center;top:758.5px">27/03/2020 23:26:57</div><div class="c" style="right:294px;top:758.5px">Local</div><div class="c n" style="right:188px;top:758.5px">1014.00</div><div class="c n" style="right:70px;top:758.5px;color:#f00">- 1014.00</div><div class="ar" style="top:815px"></div><div class="eb" style="top:808px;background:#2191d1;border:1px solid #1a84c4"><svg width="27" height="25" viewBox="0 0 27 25"><path d="M13.2 8 H7 V18.1 H17 V13.5" stroke="#fff" stroke-width="2.1" fill="none"/><path d="M10.8 16.4 L11.6 13.2 L18.6 6.2 L21.2 8.8 L14.2 15.8Z" fill="#fff"/><path d="M17.4 7.4 L20 10" stroke="#2191d1" stroke-width="0.8"/></svg></div><div class="c n" style="right:1001px;top:808.5px">480</div><div class="c" style="left:550px;width:200px;text-align:center;top:808.5px">PV</div><div class="c" style="left:649px;width:200px;text-align:center;top:808.5px;color:#2d6a1a">CERRADOS</div><div class="c" style="left:829px;top:808.5px;color:#5d7ec6">(1) Martin Origal Camarano</div><div class="c n" style="left:1039px;width:200px;text-align:center;top:808.5px">27/03/2020 17:16:04</div><div class="c" style="right:294px;top:808.5px">Local</div><div class="c n" style="right:188px;top:808.5px">0.00</div><div class="c n" style="right:70px;top:808.5px;color:#676b73">884.00</div><div class="ar" style="top:865px"></div><div class="eb" style="top:858px;background:#2191d1;border:1px solid #1a84c4"><svg width="27" height="25" viewBox="0 0 27 25"><path d="M13.2 8 H7 V18.1 H17 V13.5" stroke="#fff" stroke-width="2.1" fill="none"/><path d="M10.8 16.4 L11.6 13.2 L18.6 6.2 L21.2 8.8 L14.2 15.8Z" fill="#fff"/><path d="M17.4 7.4 L20 10" stroke="#2191d1" stroke-width="0.8"/></svg></div><div class="c n" style="right:1001px;top:858.5px">478</div><div class="c" style="left:550px;width:200px;text-align:center;top:858.5px">PV</div><div class="c" style="left:649px;width:200px;text-align:center;top:858.5px;color:#2d6a1a">CERRADOS</div><div class="c" style="left:829px;top:858.5px;color:#5d7ec6">(1) Martin Origal Camarano</div><div class="c n" style="left:1039px;width:200px;text-align:center;top:858.5px">26/03/2020 11:32:52</div><div class="c" style="right:294px;top:858.5px">Local</div><div class="c n" style="right:188px;top:858.5px">0.00</div><div class="c n" style="right:70px;top:858.5px;color:#676b73">1445.00</div></body></html>
